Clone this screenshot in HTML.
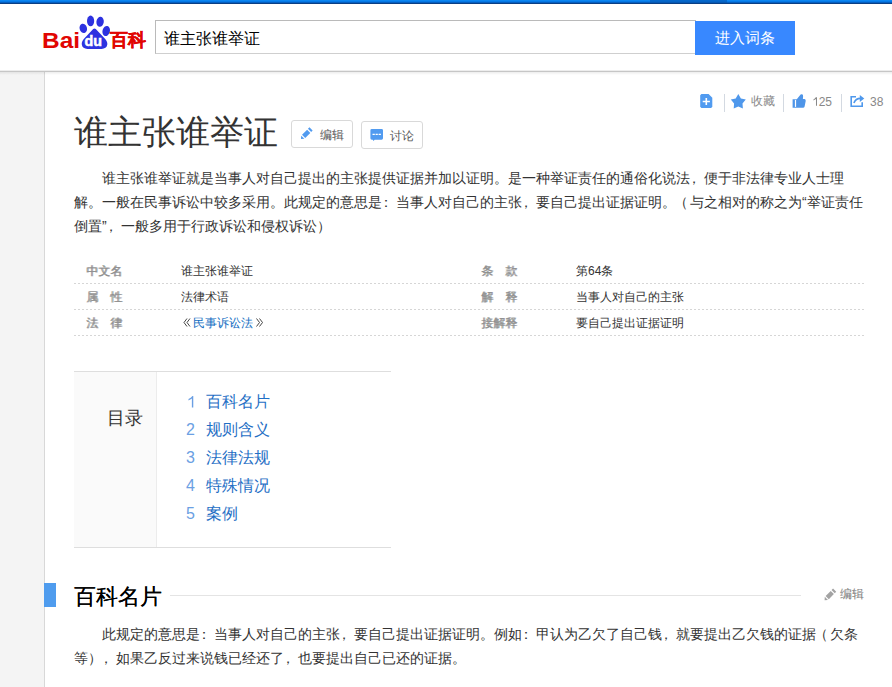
<!DOCTYPE html>
<html><head><meta charset="utf-8">
<style>
*{margin:0;padding:0;box-sizing:border-box}
html,body{width:892px;height:687px;overflow:hidden;background:#fff;font-family:"Liberation Sans",sans-serif;color:#333;position:relative}
.a{position:absolute;white-space:nowrap}
svg.a{z-index:5}
.val svg{display:inline-block}
#topbar{left:0;top:0;width:892px;height:4px;background:linear-gradient(#0b86f2 0 1px,#0478e6 1px 2px,#045fc0 2px 3px,#0a3f84 3px 4px)}
#topbar2{left:650px;top:0;width:77px;height:4px;background:linear-gradient(#0568cc 0 1px,#0564c6 1px 2px,#0558b4 2px 3px,#0a3f84 3px 4px)}
#header{left:0;top:4px;width:892px;height:67px;background:#fff}
#hdrline{left:0;top:70px;width:892px;height:2px;background:linear-gradient(#ededed 0 1px,#c6c6c6 1px 2px)}
#hdrsh{left:0;top:72px;width:892px;height:3px;background:linear-gradient(rgba(0,0,0,.07),rgba(0,0,0,0))}
#side{left:0;top:72px;width:45px;height:615px;background:#f4f4f4;border-right:1px solid #d8d8d8}
#search{left:155px;top:20px;width:541px;height:34px;border:1px solid #bababa;border-bottom-color:#cfcfcf;border-right:0;background:#fff}
#stext{left:164px;top:29px;font-size:16px;line-height:20px;color:#000}
#btn{left:695px;top:21px;width:100px;height:34px;background:#3888ff;color:#fff;font-size:15px;line-height:34px;text-align:center}
#title{left:74px;top:111px;font-size:34px;line-height:42px;color:#333}
.tbtn{height:28px;width:62px;border:1px solid #d9d9d9;border-radius:3px;background:#fff}
.tbtn span{position:absolute;left:28px;top:7px;font-size:12px;line-height:14px;color:#555}
.para{left:74px;width:790px;font-size:14px;line-height:24px;color:#333;text-indent:28px;white-space:normal;word-break:break-all}
.row{left:74px;width:790px;height:26px;background:repeating-linear-gradient(90deg,#d6d6d6 0 2px,transparent 2px 4px) left bottom/100% 1px no-repeat}
.lab{font-size:12px;line-height:26px;color:#909090;text-shadow:1px 0 0 #999}
.val{font-size:12px;line-height:26px;color:#333}
a{color:#136ec2;text-decoration:none}
.pc{font-style:normal;position:relative;left:-3px}
.tool{font-size:12px;line-height:14px;color:#888}
.sep{width:1px;height:18px;background:#d3d9e1;top:94px}
#toc{left:74px;top:371px;width:317px;height:177px;border-top:1px solid #dedede;border-bottom:1px solid #dedede}
#tocl{left:74px;top:372px;width:83px;height:175px;background:#fafafa;border-right:1px solid #ececec}
.ti{left:186px;font-size:16px;line-height:20px}
.ti b{font-weight:normal;color:#6b9fe3;display:inline-block;width:20px}
.ti a{color:#1f6fc5}
</style></head><body>
<div class="a" id="topbar"></div>
<div class="a" id="topbar2"></div>
<div class="a" id="header"></div>
<div class="a" id="hdrline"></div>
<div class="a" id="side"></div>
<div class="a" id="hdrsh"></div>

<!-- logo -->
<svg class="a" style="left:0;top:0" width="160" height="60" viewBox="0 0 160 60">
<text x="42" y="47.6" font-family="Liberation Sans" font-weight="bold" font-size="22" fill="#e10602" textLength="38" lengthAdjust="spacingAndGlyphs">Bai</text>
<g fill="#2d32e0">
<ellipse cx="83.3" cy="28.4" rx="3.7" ry="4.7" transform="rotate(-15 83.3 28.4)"/>
<ellipse cx="90.6" cy="20.9" rx="3.6" ry="5.3"/>
<ellipse cx="100.1" cy="21.8" rx="3.7" ry="5" transform="rotate(8 100.1 21.8)"/>
<ellipse cx="106.2" cy="31" rx="3.7" ry="5.1" transform="rotate(15 106.2 31)"/>
<path d="M94.5 28.6C93.6 28.6 92.8 29.4 91.8 30.5L84 38.8C82.2 40.8 81.6 42.6 81.8 44.6C82.1 47.6 84.4 48.9 87.4 48.9L101.6 48.9C104.6 48.9 107 47.6 107.3 44.6C107.5 42.6 106.8 40.8 105 38.8L97.2 30.5C96.2 29.4 95.4 28.6 94.5 28.6Z"/>
</g>
<text x="84.6" y="45.9" font-family="Liberation Sans" font-weight="bold" font-size="14.5" fill="#fff" stroke="#fff" stroke-width="0.5" textLength="17.5" lengthAdjust="spacingAndGlyphs">du</text>
<text x="109.5" y="46.3" font-weight="bold" font-size="17.5" fill="#e10602" stroke="#e10602" stroke-width="0.35">百科</text>
</svg>

<div class="a" id="search"></div>
<div class="a" id="stext">谁主张谁举证</div>
<div class="a" id="btn">进入词条</div>

<!-- toolbar -->
<svg class="a" style="left:690px;top:88px" width="180" height="24" viewBox="690 88 180 24">
<path fill="#519bf0" d="M701.4 94H708.6L712.3 97.7V106.7L711.1 107.9H701.4L700.2 106.7V95.2Z"/>
<path stroke="#fff" stroke-width="1.6" d="M702.7 101.5H709.9M706.3 98.1V104.9"/>
<path fill="#4f98ec" d="M738.3 94.1L740.9 98.4L745.8 99.6L742.5 103.4L742.9 108.4L738.3 106.4L733.7 108.4L734.1 103.4L730.8 99.6L735.7 98.4Z"/>
<path fill="#4f95e8" d="M792.6 99.2H796.8L800.6 94.6Q801.4 93.9 802.2 94.3Q803.2 94.9 803.1 96.3L802.9 99H804.6Q806 99.3 805.7 101L804.6 106.6Q804.3 107.8 803 107.8H792.6Z"/>
<path fill="#fff" d="M794.9 99.9H796.1V106.9H794.9Z"/>
<path fill="none" stroke="#4f98ec" stroke-width="1.6" d="M856 96.7H851.2V106.3H862.2V102.2"/>
<path fill="none" stroke="#4f98ec" stroke-width="1.7" d="M853.9 103Q855.6 98.5 860.6 98.4"/>
<path fill="#4f98ec" d="M859.8 95L864.3 98.4L859.8 101.9Z"/>
</svg>
<svg class="a" style="left:296px;top:122px" width="92" height="24" viewBox="296 122 92 24">
<path fill="#519bf0" d="M301.00 139.00L304.36 138.82L301.18 135.64Z M305.21 137.97L310.30 132.88L307.12 129.70L302.03 134.79Z M311.15 132.04L312.63 130.55L309.45 127.37L307.96 128.85Z"/>
<path fill="#519bf0" d="M371.8 128.9H381.6Q383 128.9 383 130.3V138.3Q383 139.7 381.6 139.7H374.6L373.6 141L372.8 139.7H371.8Q370.4 139.7 370.4 138.3V130.3Q370.4 128.9 371.8 128.9Z"/>
<path stroke="#fff" stroke-width="1.2" d="M372.5 134.3H374.8M375.6 134.3H377.8M378.6 134.3H380.9"/>
</svg>
<svg class="a" style="left:820px;top:585px" width="20" height="18" viewBox="820 585 20 18">
<path fill="#a3a3a3" d="M824.60 600.20L827.96 600.02L824.78 596.84Z M828.81 599.17L833.90 594.08L830.72 590.90L825.63 595.99Z M834.75 593.24L836.23 591.75L833.05 588.57L831.56 590.05Z"/>
</svg>
<div class="a sep" style="left:724px"></div>
<div class="a sep" style="left:783px"></div>
<div class="a sep" style="left:841px"></div>
<div class="a tool" style="left:751px;top:94px">收藏</div>
<div class="a tool" style="left:812px;top:95px"><svg width="6.67" height="12" viewBox="0 0 556 1000" style="vertical-align:-0.095em"><path fill="currentColor" d="M417 905H333V340Q290 385 120 450V368Q250 310 320 189H417Z"/></svg>25</div>
<div class="a tool" style="left:870px;top:95px">38</div>

<div class="a" id="title">谁主张谁举证</div>
<div class="a tbtn" style="left:291px;top:120px"><span>编辑</span></div>
<div class="a tbtn" style="left:361px;top:121px"><span>讨论</span></div>

<div class="a para" style="top:166px">谁主张谁举证就是当事人对自己提出的主张提供证据并加以证明。是一种举证责任的通俗化说法<i class="pc">，</i>便于非法律专业人士理解。一般在民事诉讼中较多采用。此规定的意思是<i class="pc">：</i>当事人对自己的主张<i class="pc">，</i>要自己提出证据证明。<i class="pc" style="left:-2px">（</i>与之相对的称之为“举证责任倒置”<i class="pc">，</i>一般多用于行政诉讼和侵权诉讼）</div>

<div class="a row" style="top:258px"></div>
<div class="a row" style="top:284px"></div>
<div class="a row" style="top:310px"></div>
<div class="a lab" style="left:86px;top:258px">中文名</div>
<div class="a val" style="left:181px;top:258px">谁主张谁举证</div>
<div class="a lab" style="left:86px;top:284px">属　性</div>
<div class="a val" style="left:181px;top:284px">法律术语</div>
<div class="a lab" style="left:86px;top:310px">法　律</div>
<div class="a val" style="left:181px;top:310px"><svg width="12" height="12" viewBox="0 0 12 12" style="vertical-align:-1px"><path d="M6 2.5L3 6.5L6 10.5M9 2.5L6 6.5L9 10.5" fill="none" stroke="#333" stroke-width="0.9"/></svg><a>民事诉讼法</a><svg width="12" height="12" viewBox="0 0 12 12" style="vertical-align:-1px"><path d="M3.5 2.5L6.5 6.5L3.5 10.5M6.5 2.5L9.5 6.5L6.5 10.5" fill="none" stroke="#333" stroke-width="0.9"/></svg></div>
<div class="a lab" style="left:481px;top:258px">条　款</div>
<div class="a val" style="left:576px;top:258px">第64条</div>
<div class="a lab" style="left:481px;top:284px">解　释</div>
<div class="a val" style="left:576px;top:284px">当事人对自己的主张</div>
<div class="a lab" style="left:481px;top:310px">接解释</div>
<div class="a val" style="left:576px;top:310px">要自己提出证据证明</div>

<div class="a" id="toc"></div>
<div class="a" id="tocl"></div>
<div class="a" style="left:107px;top:407px;font-size:18px;line-height:22px;color:#333">目录</div>
<div class="a ti" style="top:392px"><b><svg width="8.90" height="16" viewBox="0 0 556 1000" style="vertical-align:-0.095em"><path fill="currentColor" d="M455 905H367V336Q330 372 268 410Q206 447 156 466V381Q246 339 313 280Q380 221 408 189H455Z"/></svg></b><a>百科名片</a></div>
<div class="a ti" style="top:420px"><b>2</b><a>规则含义</a></div>
<div class="a ti" style="top:448px"><b>3</b><a>法律法规</a></div>
<div class="a ti" style="top:476px"><b>4</b><a>特殊情况</a></div>
<div class="a ti" style="top:504px"><b>5</b><a>案例</a></div>

<div class="a" style="left:44px;top:583px;width:12px;height:24px;background:#4f9cee"></div>
<div class="a" style="left:74px;top:584px;font-size:22px;line-height:26px;color:#000;text-shadow:0.3px 0 0 #000">百科名片</div>
<div class="a" style="left:170px;top:595px;width:631px;height:1px;background:#e4e4e4"></div>
<div class="a tool" style="left:840px;top:587px;color:#7a7a7a">编辑</div>

<div class="a para" style="top:622px">此规定的意思是<i class="pc">：</i>当事人对自己的主张<i class="pc">，</i>要自己提出证据证明。例如<i class="pc">：</i>甲认为乙欠了自己钱<i class="pc">，</i>就要提出乙欠钱的证据<i class="pc" style="left:-2px">（</i>欠条等）<i class="pc">，</i>如果乙反过来说钱已经还了<i class="pc">，</i>也要提出自己已还的证据。</div>
</body></html>
